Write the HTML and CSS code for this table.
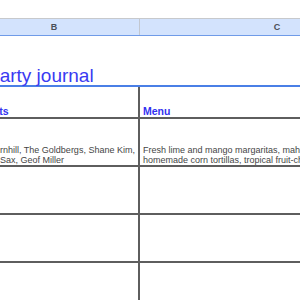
FILE: index.html
```html
<!DOCTYPE html>
<html>
<head>
<meta charset="utf-8">
<link rel="stylesheet" href="styles.css">
</head>
<body>
<div class="sheet">
  <div class="topgap"></div>
  <div class="colhead">
    <div class="col-label col-b">B</div>
    <div class="col-label">C</div>
  </div>
  <div class="title-row"><span class="title">Party journal</span></div>
  <div class="row head-row">
    <div class="cell cell-b"><span class="heading">Guests</span></div>
    <div class="cell"><span class="heading">Menu</span></div>
  </div>
  <div class="row">
    <div class="cell cell-b">
      <div class="lines lines-b">
        <span class="line">rnhill, The Goldbergs, Shane Kim,</span>
        <span class="line">Sax, Geof Miller</span>
      </div>
    </div>
    <div class="cell">
      <div class="lines">
        <span class="line">Fresh lime and mango margaritas, mahi mahi tacos,</span>
        <span class="line">homemade corn tortillas, tropical fruit-chili salsa</span>
      </div>
    </div>
  </div>
  <div class="row">
    <div class="cell cell-b"></div>
    <div class="cell"></div>
  </div>
  <div class="row">
    <div class="cell cell-b"></div>
    <div class="cell"></div>
  </div>
  <div class="row">
    <div class="cell cell-b"></div>
    <div class="cell"></div>
  </div>
</div>
</body>
</html>
```

FILE: styles.css
```css
html, body {
  margin: 0;
  padding: 0;
  background: #ffffff;
}
body {
  width: 300px;
  height: 300px;
  overflow: hidden;
}
.sheet {
  width: 445px;
  margin-left: -31px;
  font-family: "Liberation Sans", Arial, sans-serif;
}
.topgap {
  height: 18px;
}
.colhead {
  display: grid;
  grid-template-columns: 171px 274px;
  height: 18px;
  box-sizing: border-box;
  background: #d3e3fd;
  border-top: 1px solid #c7c9cc;
  border-bottom: 1px solid #6f9be8;
}
.col-label {
  display: flex;
  align-items: center;
  justify-content: center;
  font-size: 9px;
  font-weight: bold;
  color: #4a4f57;
}
.col-b {
  border-right: 1px solid #c2c7d0;
}
.title-row {
  height: 51px;
  box-sizing: border-box;
  border-bottom: 2px solid #4a7fe6;
  display: flex;
  align-items: flex-end;
  padding-left: 18px;
}
.title {
  font-size: 19px;
  line-height: 19px;
  color: #3a3af2;
  white-space: nowrap;
}
.row {
  display: grid;
  grid-template-columns: 171px 274px;
  height: 48px;
  box-sizing: border-box;
  border-bottom: 2px solid #5e5e5e;
}
.head-row {
  height: 32px;
}
.cell {
  display: flex;
  align-items: flex-end;
  padding: 0 3px;
  overflow: hidden;
  min-width: 0;
}
.cell-b {
  border-right: 2px solid #5e5e5e;
  padding-left: 4px;
}
.heading {
  font-size: 10.5px;
  line-height: 11px;
  font-weight: bold;
  color: #3232f0;
  white-space: nowrap;
}
.lines {
  display: flex;
  flex-direction: column;
  font-size: 9px;
  line-height: 10px;
  color: #454545;
}
.lines-b {
  padding-left: 27px;
}
.line {
  white-space: nowrap;
}
```
